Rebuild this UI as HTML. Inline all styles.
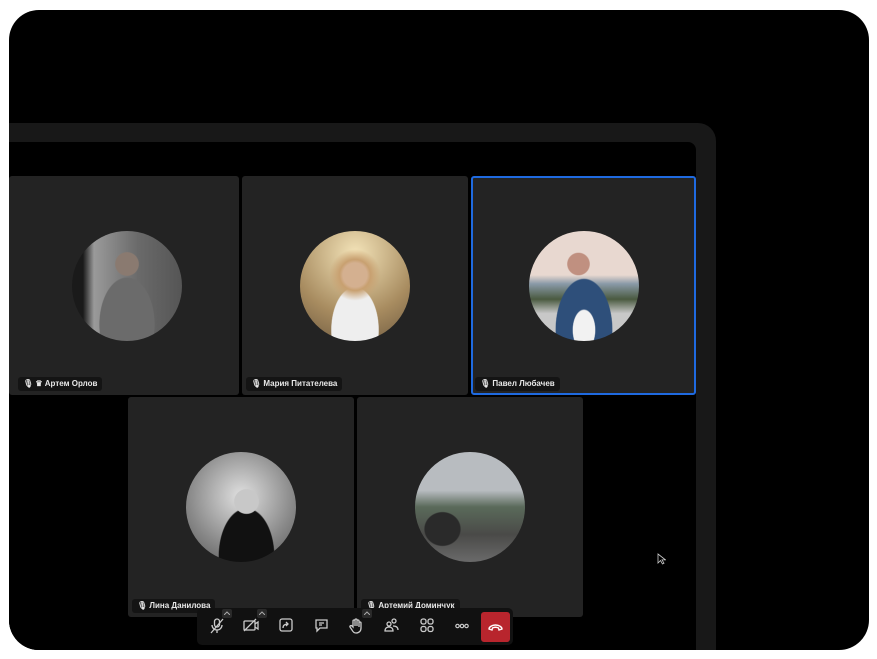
<!DOCTYPE html>
<html><head><meta charset="utf-8"><style>
*{margin:0;padding:0;box-sizing:border-box}
body{width:877px;height:659px;background:#fff;position:relative;overflow:hidden;font-family:"Liberation Sans",sans-serif}
.outer{position:absolute;left:9px;top:10px;width:860px;height:640px;background:#000;border-radius:30px;overflow:hidden}
.frame{position:absolute;left:0;top:113px;width:707px;height:540px;background:#181818;border-top-right-radius:18px}
.screen{position:absolute;left:0;top:132px;width:687px;height:520px;background:#000;border-top-right-radius:8px}
.tile{position:absolute;background:#232323;border-radius:3px;width:226px;height:219px}
.tile.sel{border:2px solid #1f6ae0}
.av{position:absolute;width:110px;height:110px;border-radius:50%;left:50%;top:50%;margin:-55px 0 0 -55px;overflow:hidden}
.lbl{position:absolute;left:4px;bottom:4px;background:#141414;color:#e8e8e8;font-size:8px;font-weight:bold;height:14px;line-height:14px;padding:0 5px;border-radius:3px;white-space:nowrap}
.bar{position:absolute;left:188px;top:598px;width:316px;height:37px;background:#111;border-radius:5px}
.bar svg{position:absolute;top:10px}
.end{position:absolute;left:284px;top:4px;width:29px;height:30px;background:#b8252d;border-radius:3px}
.car{position:absolute;top:1px;width:10px;height:9px;background:#2a2a2a;border-radius:2px}
</style></head><body>
<div class="outer">
<div class="frame"></div>
<div class="screen"></div>

<div class="tile" style="left:0;top:166px;width:230px">
 <div class="av" style="left:118px;background:radial-gradient(circle at 50% 30%,#8a7a70 0 12%,transparent 13%),radial-gradient(ellipse at 50% 85%,#6b6b6b 0 35%,transparent 36%),linear-gradient(90deg,#1a1a1a 0 10%,#9a9a9a 20%,#6a6a6a 60%,#555 100%)"></div>
 <div class="lbl" style="left:9px">🎙︎ ♛ Артем Орлов</div>
</div>
<div class="tile" style="left:233px;top:166px">
 <div class="av" style="background:radial-gradient(circle at 50% 40%,#d4b090 0 14%,#c8a070 18%,transparent 30%),radial-gradient(ellipse at 50% 90%,#eee 0 30%,transparent 31%),radial-gradient(circle at 50% 20%,#f3e3b8,#a88c60 60%,#6e5a40)"></div>
 <div class="lbl">🎙︎ Мария Питателева</div>
</div>
<div class="tile sel" style="left:462px;top:166px;width:225px;height:219px">
 <div class="av" style="background:radial-gradient(circle at 45% 30%,#c09080 0 11%,transparent 12%),radial-gradient(ellipse at 50% 90%,#f2f2f2 0 14%,#2e4f7a 15% 36%,transparent 37%),linear-gradient(180deg,#e8d8d0 0 40%,#8a9aa8 48%,#4a5a40 62%,#c8c8c8 75%)"></div>
 <div class="lbl" style="bottom:2px;left:2px">🎙︎ Павел Любачев</div>
</div>
<div class="tile" style="left:119px;top:387px;height:220px">
 <div class="av" style="background:radial-gradient(circle at 55% 45%,#c8c8c8 0 14%,transparent 15%),radial-gradient(ellipse at 55% 95%,#111 0 32%,transparent 33%),radial-gradient(circle at 50% 40%,#e0e0e0,#8a8a8a 60%,#555)"></div>
 <div class="lbl">🎙︎ Лина Данилова</div>
</div>
<div class="tile" style="left:348px;top:387px;height:220px">
 <div class="av" style="background:radial-gradient(ellipse at 25% 70%,#2a2a2a 0 15%,transparent 16%),linear-gradient(180deg,#b8bcc0 0 35%,#5a6a5a 50%,#4a4a48 75%,#6a6a6a)"></div>
 <div class="lbl">🎙︎ Артемий Доминчук</div>
</div>

<svg style="position:absolute;left:648px;top:543px" width="9" height="12" viewBox="0 0 9 12"><path d="M1 1v9l2.5-2.5 2 3.5 1.5-.8-2-3.3H8.5z" fill="#000" stroke="#ccc" stroke-width=".8"/></svg>

<div class="bar">
 <div class="car" style="left:25px"><svg style="top:2px;left:2px" width="6" height="4"><path d="M0 4L3 1 6 4" stroke="#aaa" fill="none"/></svg></div>
 <div class="car" style="left:60px"><svg style="top:2px;left:2px" width="6" height="4"><path d="M0 4L3 1 6 4" stroke="#aaa" fill="none"/></svg></div>
 <div class="car" style="left:165px"><svg style="top:2px;left:2px" width="6" height="4"><path d="M0 4L3 1 6 4" stroke="#aaa" fill="none"/></svg></div>
 <svg style="left:13px" width="14" height="16" viewBox="0 0 14 16" fill="none" stroke="#ccc" stroke-width="1.3"><rect x="4.5" y="1" width="5" height="8" rx="2.5"/><path d="M2 7a5 5 0 0 0 10 0M7 12v3M1 15L13 1"/></svg>
 <svg style="left:46px" width="16" height="14" viewBox="0 0 16 14" fill="none" stroke="#ccc" stroke-width="1.3"><rect x="1" y="3" width="11" height="9" rx="1"/><path d="M12 6l3-2v7l-3-2M1 13L13 1"/></svg>
 <svg style="left:82px" width="14" height="14" viewBox="0 0 14 14" fill="none" stroke="#ccc" stroke-width="1.3"><rect x="1" y="1" width="12" height="12" rx="2"/><path d="M4 10c0-3 2-4 5-4M7 4l2 2-2 2"/></svg>
 <svg style="left:117px" width="15" height="15" viewBox="0 0 15 15" fill="none" stroke="#ccc" stroke-width="1.3"><path d="M2 2h11v8H6l-3 3v-3H2z"/><path d="M5 5h5M5 7h3"/></svg>
 <svg style="left:152px" width="14" height="16" viewBox="0 0 14 16" fill="none" stroke="#ccc" stroke-width="1.3"><path d="M4 9V3a1 1 0 0 1 2 0v5V2a1 1 0 0 1 2 0v6V3a1 1 0 0 1 2 0v6V5a1 1 0 0 1 2 0v5c0 3-2 5-5 5-2 0-3-1-4-3L1 9c-.5-1 1-2 2-1z"/></svg>
 <svg style="left:187px" width="15" height="15" viewBox="0 0 15 15" fill="none" stroke="#ccc" stroke-width="1.3"><circle cx="5" cy="6" r="2"/><circle cx="10" cy="3" r="2"/><path d="M1 13c0-3 2-4 4-4s4 1 4 4zM9 8c3 0 5 1 5 4"/></svg>
 <svg style="left:223px" width="14" height="15" viewBox="0 0 14 15" fill="none" stroke="#ccc" stroke-width="1.3"><rect x="1" y="1" width="5" height="5" rx="2"/><rect x="8" y="1" width="5" height="5" rx="2"/><rect x="1" y="8.5" width="5" height="5" rx="2"/><rect x="8" y="8.5" width="5" height="5" rx="2"/></svg>
 <svg style="left:258px;top:15px" width="14" height="6" viewBox="0 0 14 6" fill="none" stroke="#ccc" stroke-width="1.2"><circle cx="2.5" cy="3" r="1.7"/><circle cx="7" cy="3" r="1.7"/><circle cx="11.5" cy="3" r="1.7"/></svg>
 <div class="end"><svg style="position:absolute;left:7px;top:12px" width="15" height="7" viewBox="0 0 15 7" fill="none" stroke="#fff" stroke-width="1.4"><path d="M1 5c0-2 3-4 6.5-4S14 3 14 5l-3 1-.5-2c-2-1-4-1-6 0L4 6z"/></svg></div>
</div>
</div>
</body></html>
